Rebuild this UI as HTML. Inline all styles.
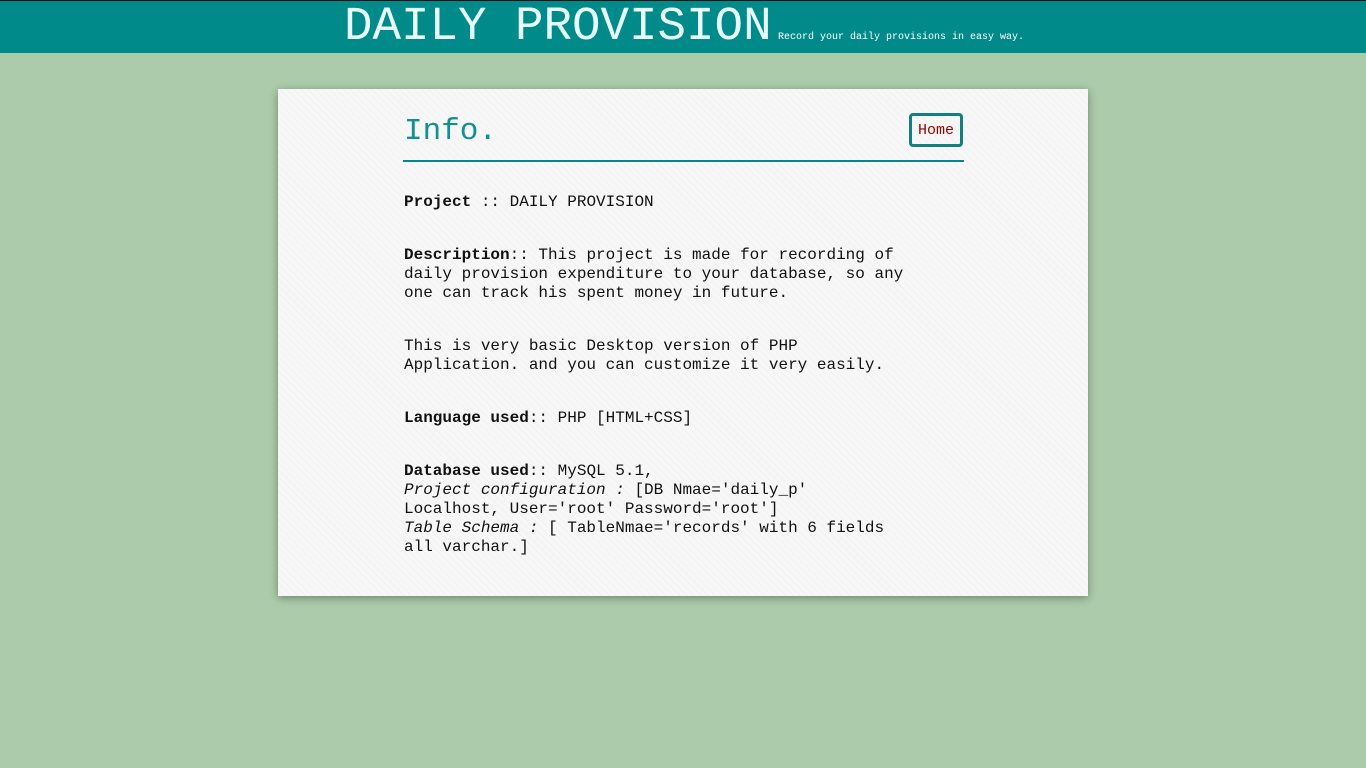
<!DOCTYPE html>
<html><head><style>
body{margin:0;background:#abcbab;font-family:"Liberation Mono",monospace;width:1366px;height:768px;overflow:hidden;position:relative}
.hdr{position:absolute;left:0;top:0;width:1366px;height:53px;background:#008a8a;border-top:1px solid #111;box-sizing:border-box}
.t{position:absolute;left:344px;top:3px;font-size:47.5px;color:#e8ffff;line-height:46px;white-space:nowrap}
.s{position:absolute;left:778px;top:31px;font-size:10px;color:#fff;white-space:nowrap}
.card{position:absolute;left:278px;top:89px;width:810px;height:507px;background:repeating-linear-gradient(45deg,#f7f7f7 0 4px,#f2f2f2 4px 5px);box-shadow:0 2px 8px rgba(0,0,0,.35)}
.info{position:absolute;left:126px;top:25px;font-size:31px;color:#119191;line-height:36px}
.line{position:absolute;left:125px;top:71px;width:561px;height:2px;background:#008a8a}
.home{position:absolute;left:631px;top:24px;width:54px;height:34px;box-sizing:border-box;border:3px solid #138080;border-radius:4px;color:#990000;font-size:15px;line-height:29px;text-align:center}
.p{position:absolute;left:126px;font-size:16px;line-height:19px;color:#111;white-space:nowrap}
</style></head><body>
<div class="hdr"><div class="t">DAILY PROVISION</div><div class="s">Record your daily provisions in easy way.</div></div>
<div class="card">
<div class="info">Info.</div>
<div class="home">Home</div>
<div class="line"></div>
<div class="p" style="top:104px"><b>Project</b> :: DAILY PROVISION</div>
<div class="p" style="top:157px"><b>Description</b>:: This project is made for recording of<br>daily provision expenditure to your database, so any<br>one can track his spent money in future.</div>
<div class="p" style="top:248px">This is very basic Desktop version of PHP<br>Application. and you can customize it very easily.</div>
<div class="p" style="top:320px"><b>Language used</b>:: PHP [HTML+CSS]</div>
<div class="p" style="top:373px"><b>Database used</b>:: MySQL 5.1,<br><i>Project configuration :</i> [DB Nmae='daily_p'<br>Localhost, User='root' Password='root']<br><i>Table Schema :</i> [ TableNmae='records' with 6 fields<br>all varchar.]</div>
</div>
</body></html>
